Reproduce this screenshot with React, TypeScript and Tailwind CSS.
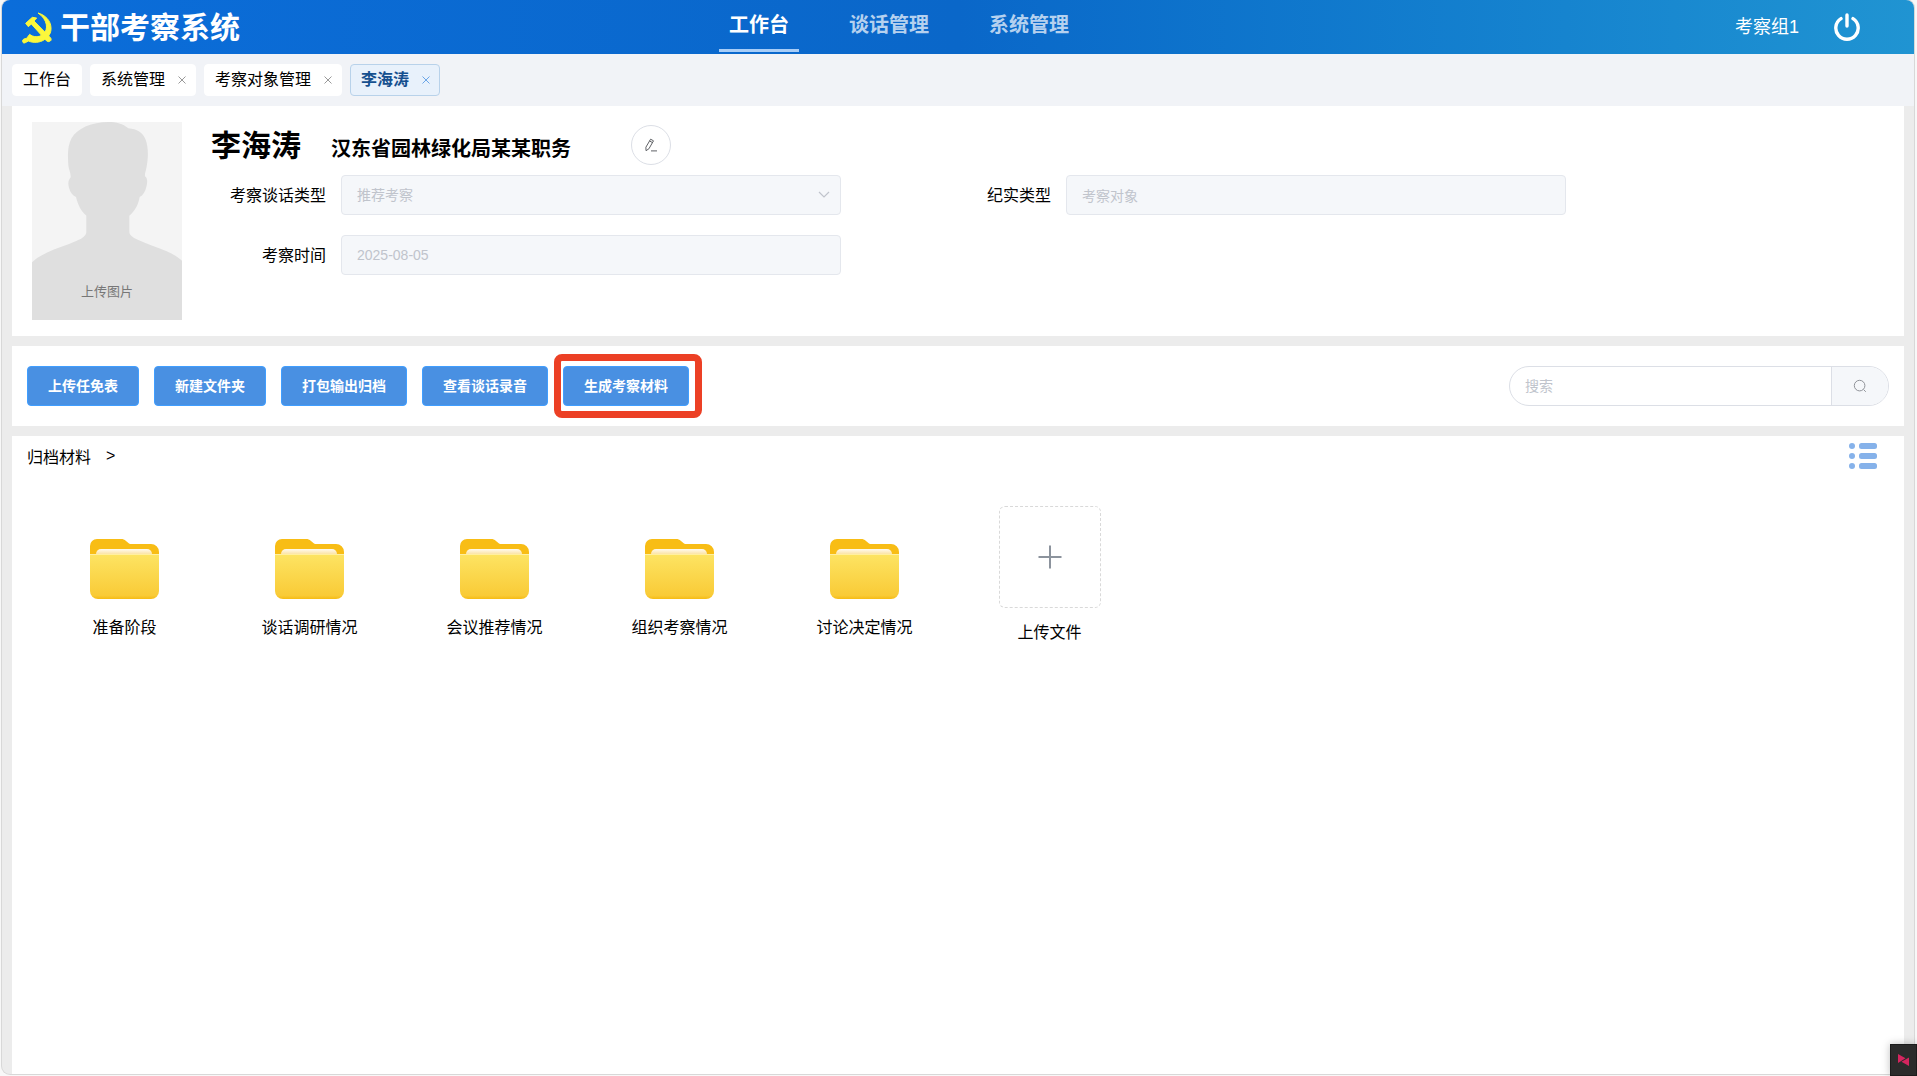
import { useState } from "react";

const navItems = ["工作台", "谈话管理", "系统管理"];

const tabs = [
  { label: "工作台", closable: false },
  { label: "系统管理", closable: true },
  { label: "考察对象管理", closable: true },
  { label: "李海涛", closable: true },
];

const folders = [
  "准备阶段",
  "谈话调研情况",
  "会议推荐情况",
  "组织考察情况",
  "讨论决定情况",
];

const actions = ["上传任免表", "新建文件夹", "打包输出归档", "查看谈话录音"];

const actionClass =
  "h-10 rounded border border-[#409eff] bg-[#4990e2] px-5 text-sm font-bold text-white";

const fieldClass =
  "h-10 w-full appearance-none rounded border border-[#e4e7ed] bg-[#f5f7fa] px-[15px] text-sm text-[#c0c4cc] opacity-100";

const labelClass = "w-[130px] pt-0.5 pr-[15px] text-right";

const PartyLogo = () => (
  <svg className="h-8 w-[30px] shrink-0" viewBox="0 0 90 94" aria-hidden="true">
    <g fill="#fbf73c" stroke="#fbf73c" strokeWidth="3" strokeLinejoin="round">
      <path d="M48 2C70 8 86 25 87 46c1 16-7 28-20 36-15 10-34 10-48 4l-9 5c-4 2-7 1-8-3-1-3 0-6 4-8l8-2 9-12c10 9 28 10 40 0 18-14 13-46-15-64z" />
      <path d="M11 33 31 15l13 2-8 9 50 51c2 3 2 7-1 9s-8 3-11 0L28 35 19 43z" />
    </g>
  </svg>
);

const PowerIcon = () => (
  <svg
    className="h-7 w-[26px]"
    viewBox="0 0 26 28"
    fill="none"
    stroke="currentColor"
    strokeWidth="3.4"
    strokeLinecap="round"
    aria-hidden="true"
  >
    <path d="M13 2v11M7 5.600a11.200 11.200 0 1 0 12 0" />
  </svg>
);

const CloseIcon = () => (
  <svg className="size-2.5" viewBox="0 0 10 10" stroke="currentColor" aria-hidden="true">
    <path d="M1.500 1.500l7 7M8.500 1.500l-7 7" />
  </svg>
);

// Element-style pencil with a short underline
const EditIcon = () => (
  <svg
    className="size-3.5"
    viewBox="0 0 14 14"
    fill="none"
    stroke="currentColor"
    aria-hidden="true"
  >
    <path d="M6.600 1.200l2.900 1.600-4.600 8-2.900 1.900-.1-3.500zM5.600 3l2.900 1.600M7 12.900h6" />
  </svg>
);

const SearchIcon = () => (
  <svg
    className="size-3.5"
    viewBox="0 0 14 14"
    fill="none"
    stroke="currentColor"
    aria-hidden="true"
  >
    <circle cx="6.6" cy="6.6" r="5.3" />
    <path d="M10.600 10.600l2.200 2.200" />
  </svg>
);

const ListIcon = () => (
  <svg className="h-[26px] w-7" viewBox="0 0 28 26" fill="#86b2ea" aria-hidden="true">
    {[0, 10, 20].map((y) => (
      <g key={y}>
        <circle cx="3" cy={y + 3} r="3" />
        <rect x="10" y={y} width="18" height="6" rx="2.5" />
      </g>
    ))}
  </svg>
);

const FolderIcon = () => (
  <svg className="h-[60px] w-[69px]" viewBox="0 0 69 60" aria-hidden="true">
    <defs>
      <linearGradient id="folderFront" x1="0" y1="0" x2="0" y2="1">
        <stop offset="0" stopColor="#fde463" />
        <stop offset="0.92" stopColor="#f9cb37" />
        <stop offset="1" stopColor="#f6bb14" />
      </linearGradient>
      <linearGradient id="folderPaper" x1="0" y1="0" x2="0" y2="1">
        <stop offset="0" stopColor="#fffaf0" />
        <stop offset="1" stopColor="#fbdf97" />
      </linearGradient>
    </defs>
    <path
      fill="#f8bd15"
      d="M0 7a7 7 0 0 1 7-7h24c2 0 3.500.6 5 2l3 2.400c.7.5 1.400.6 2 .6h20a8 8 0 0 1 8 8v22H0z"
    />
    <path fill="url(#folderPaper)" d="M6 16v-1a5 5 0 0 1 5-5h46a5 5 0 0 1 5 5v1z" />
    <path fill="url(#folderFront)" d="M0 15h69v37a8 8 0 0 1-8 8H8a8 8 0 0 1-8-8z" />
    <path fill="#fff0a0" d="M0 15h69v1H0z" />
  </svg>
);

const Silhouette = () => (
  <svg className="block size-full" viewBox="0 0 450 594" aria-hidden="true">
    <path
      fill="#dfdfdf"
      d="M229 0C254 0 272 5 289 19c26 2 43 12 52 34 9 24 8 56 2 86-2 10-5 16-4 24 8 7 8 17 4 32-3 14-10 25-20 30-4 22-12 40-31 56v48c0 9 9 16 22 23 30 14 60 23 90 36 20 9 35 18 46 28v178H0V421c12-12 26-20 44-29 28-14 60-22 90-36 18-7 29-16 29-27v-48c-17-15-25-32-31-56-11-6-17-14-21-28-4-14-2-22 5-31 1-12-6-22-7-36-2-32-3-58 10-82C136 19 180 0 229 0z"
    />
  </svg>
);

export default function App() {
  const [activeNav, setActiveNav] = useState("工作台");
  const [activeTab, setActiveTab] = useState("李海涛");
  const [keyword, setKeyword] = useState("");

  return (
    <div className="flex min-h-screen flex-col bg-[#f8f8f8] pr-[3px] pb-0.5 pl-0.5 font-['Liberation_Sans','Noto_Sans_CJK_SC',sans-serif] text-base text-black">
      <div className="flex flex-1 flex-col overflow-hidden rounded-lg bg-[#ececec] shadow-[0_0_0_1px_#d8d8d8]">
        <header className="flex h-[54px] bg-linear-to-r from-[#0b6dda] via-[#0a67c9] to-[#2094d2] text-white">
          <div className="flex w-[37.5%] items-center gap-2 pt-0.5 pl-5">
            <PartyLogo />
            <h1 className="text-3xl leading-10 font-bold">干部考察系统</h1>
          </div>
          <nav className="flex gap-10">
            {navItems.map((item) => (
              <a
                key={item}
                href="#"
                onClick={() => setActiveNav(item)}
                className={
                  item === activeNav
                    ? "h-[52px] border-b-3 border-[#a8cdf7] px-2.5 text-xl leading-[50px] font-bold"
                    : "h-[52px] px-2.5 text-xl leading-[50px] font-bold text-[#b5d1ef]"
                }
              >
                {item}
              </a>
            ))}
          </nav>
          <div className="ml-auto flex items-center gap-[35px] pr-[54px]">
            <span className="text-lg">考察组1</span>
            <button type="button" aria-label="退出">
              <PowerIcon />
            </button>
          </div>
        </header>

        <div className="flex h-[52px] items-center gap-2 bg-[#f1f3f7] px-2.5">
          {tabs.map((tab) => (
            <div
              key={tab.label}
              className={
                tab.label === activeTab
                  ? "flex h-8 items-center gap-3 rounded-sm border border-[#b8d2ea] bg-[#e8f1fb] px-2.5 font-bold text-[#16508f]"
                  : "flex h-8 items-center gap-3 rounded-sm border border-white bg-white px-2.5"
              }
            >
              <button type="button" onClick={() => setActiveTab(tab.label)}>
                {tab.label}
              </button>
              {tab.closable && (
                <button
                  type="button"
                  aria-label="关闭"
                  className={
                    tab.label === activeTab ? "-mr-0.5 text-[#6ba6e8]" : "-mr-0.5 text-[#999999]"
                  }
                >
                  <CloseIcon />
                </button>
              )}
            </div>
          ))}
        </div>

        <main className="flex flex-1 flex-col gap-2.5 px-2.5">
          <section className="flex gap-[29px] bg-white px-5 py-4">
            <button type="button" className="relative h-[198px] w-[150px] shrink-0 bg-[#f4f4f4]">
              <Silhouette />
              <span className="absolute inset-x-0 bottom-5 text-center text-[13px] leading-4 text-[#777777]">
                上传图片
              </span>
            </button>
            <div className="flex-1">
              <div className="flex h-[53px] items-center">
                <h2 className="pb-1.5 text-3xl font-bold">李海涛</h2>
                <p className="ml-[30px] text-xl font-bold">汉东省园林绿化局某某职务</p>
                <button
                  type="button"
                  aria-label="编辑"
                  className="mb-2 ml-[60px] flex size-10 items-center justify-center rounded-full border border-[#dcdfe6] text-[#606266]"
                >
                  <EditIcon />
                </button>
              </div>
              <form className="grid max-w-[1450px] grid-cols-2 gap-y-5">
                <div className="flex items-center">
                  <label htmlFor="talkType" className={labelClass}>
                    考察谈话类型
                  </label>
                  <div className="relative max-w-[500px] flex-1">
                    <select id="talkType" disabled className={fieldClass}>
                      <option>推荐考察</option>
                    </select>
                    <svg
                      className="pointer-events-none absolute top-4 right-[11px] h-2 w-3"
                      viewBox="0 0 12 8"
                      fill="none"
                      stroke="#c0c4cc"
                      strokeWidth="1.2"
                      aria-hidden="true"
                    >
                      <path d="M1 1l5 5 5-5" />
                    </svg>
                  </div>
                </div>
                <div className="flex items-center">
                  <label htmlFor="recordType" className={labelClass}>
                    纪实类型
                  </label>
                  <div className="max-w-[500px] flex-1">
                    <input id="recordType" disabled value="考察对象" className={fieldClass} />
                  </div>
                </div>
                <div className="flex items-center">
                  <label htmlFor="checkDate" className={labelClass}>
                    考察时间
                  </label>
                  <div className="max-w-[500px] flex-1">
                    <input id="checkDate" disabled value="2025-08-05" className={fieldClass} />
                  </div>
                </div>
              </form>
            </div>
          </section>

          <section className="flex items-center justify-between bg-white px-[15px] py-5">
            <div className="flex gap-[15px]">
              {actions.map((action) => (
                <button key={action} type="button" className={actionClass}>
                  {action}
                </button>
              ))}
              <div className="relative">
                <button type="button" className={actionClass}>
                  生成考察材料
                </button>
                <div className="pointer-events-none absolute -inset-y-3 -right-[13px] -left-[9px] rounded-lg border-7 border-[#ec4025]" />
              </div>
            </div>
            <form className="flex h-10 w-[380px] overflow-hidden rounded-full border border-[#dcdfe6]">
              <input
                type="text"
                aria-label="搜索"
                placeholder="搜索"
                value={keyword}
                onChange={(e) => setKeyword(e.target.value)}
                className="min-w-0 flex-1 px-[15px] text-sm outline-none placeholder:text-[#c0c4cc]"
              />
              <button
                type="button"
                aria-label="查询"
                className="flex w-[57px] items-center justify-center border-l border-[#dcdfe6] bg-[#f5f7fa] text-[#909399]"
              >
                <SearchIcon />
              </button>
            </form>
          </section>

          <section className="flex-1 bg-white">
            <div className="flex h-10 items-center justify-between pr-[27px] pl-[15px]">
              <div className="flex gap-[15px] pt-0.5">
                <a href="#" className="pt-0.5">
                  归档材料
                </a>
                <span>&gt;</span>
              </div>
              <button type="button" aria-label="列表视图">
                <ListIcon />
              </button>
            </div>
            <ul className="flex flex-wrap px-5 pt-[30px]">
              {folders.map((folder) => (
                <li key={folder} className="flex w-[185px] flex-col items-center pt-[33px]">
                  <FolderIcon />
                  <span className="mt-[17px]">{folder}</span>
                </li>
              ))}
              <li className="w-[185px]">
                <button type="button" className="flex w-full flex-col items-center">
                  <span className="flex size-[102px] items-center justify-center rounded-md border border-dashed border-[#d9d9d9]">
                    <svg className="size-6" viewBox="0 0 24 24" stroke="#8c939d" aria-hidden="true">
                      <path strokeWidth="2" d="M12 .5v23M.5 12h23" />
                    </svg>
                  </span>
                  <span className="mt-[13px]">上传文件</span>
                </button>
              </li>
            </ul>
          </section>
        </main>
      </div>

      <div className="fixed right-0 bottom-0 flex h-8 w-[27px] items-center justify-center border border-[#1c1c1c] bg-[#2b2b2b] shadow-[0_0_8px_rgba(0,0,0,0.25)]">
        <svg className="h-3 w-[11px]" viewBox="0 0 11 12" fill="#d5255f" aria-hidden="true">
          <path d="M0 0l7.500 4.200L0 9zM11 3.500V12L3.500 7.800z" />
        </svg>
      </div>
    </div>
  );
}
